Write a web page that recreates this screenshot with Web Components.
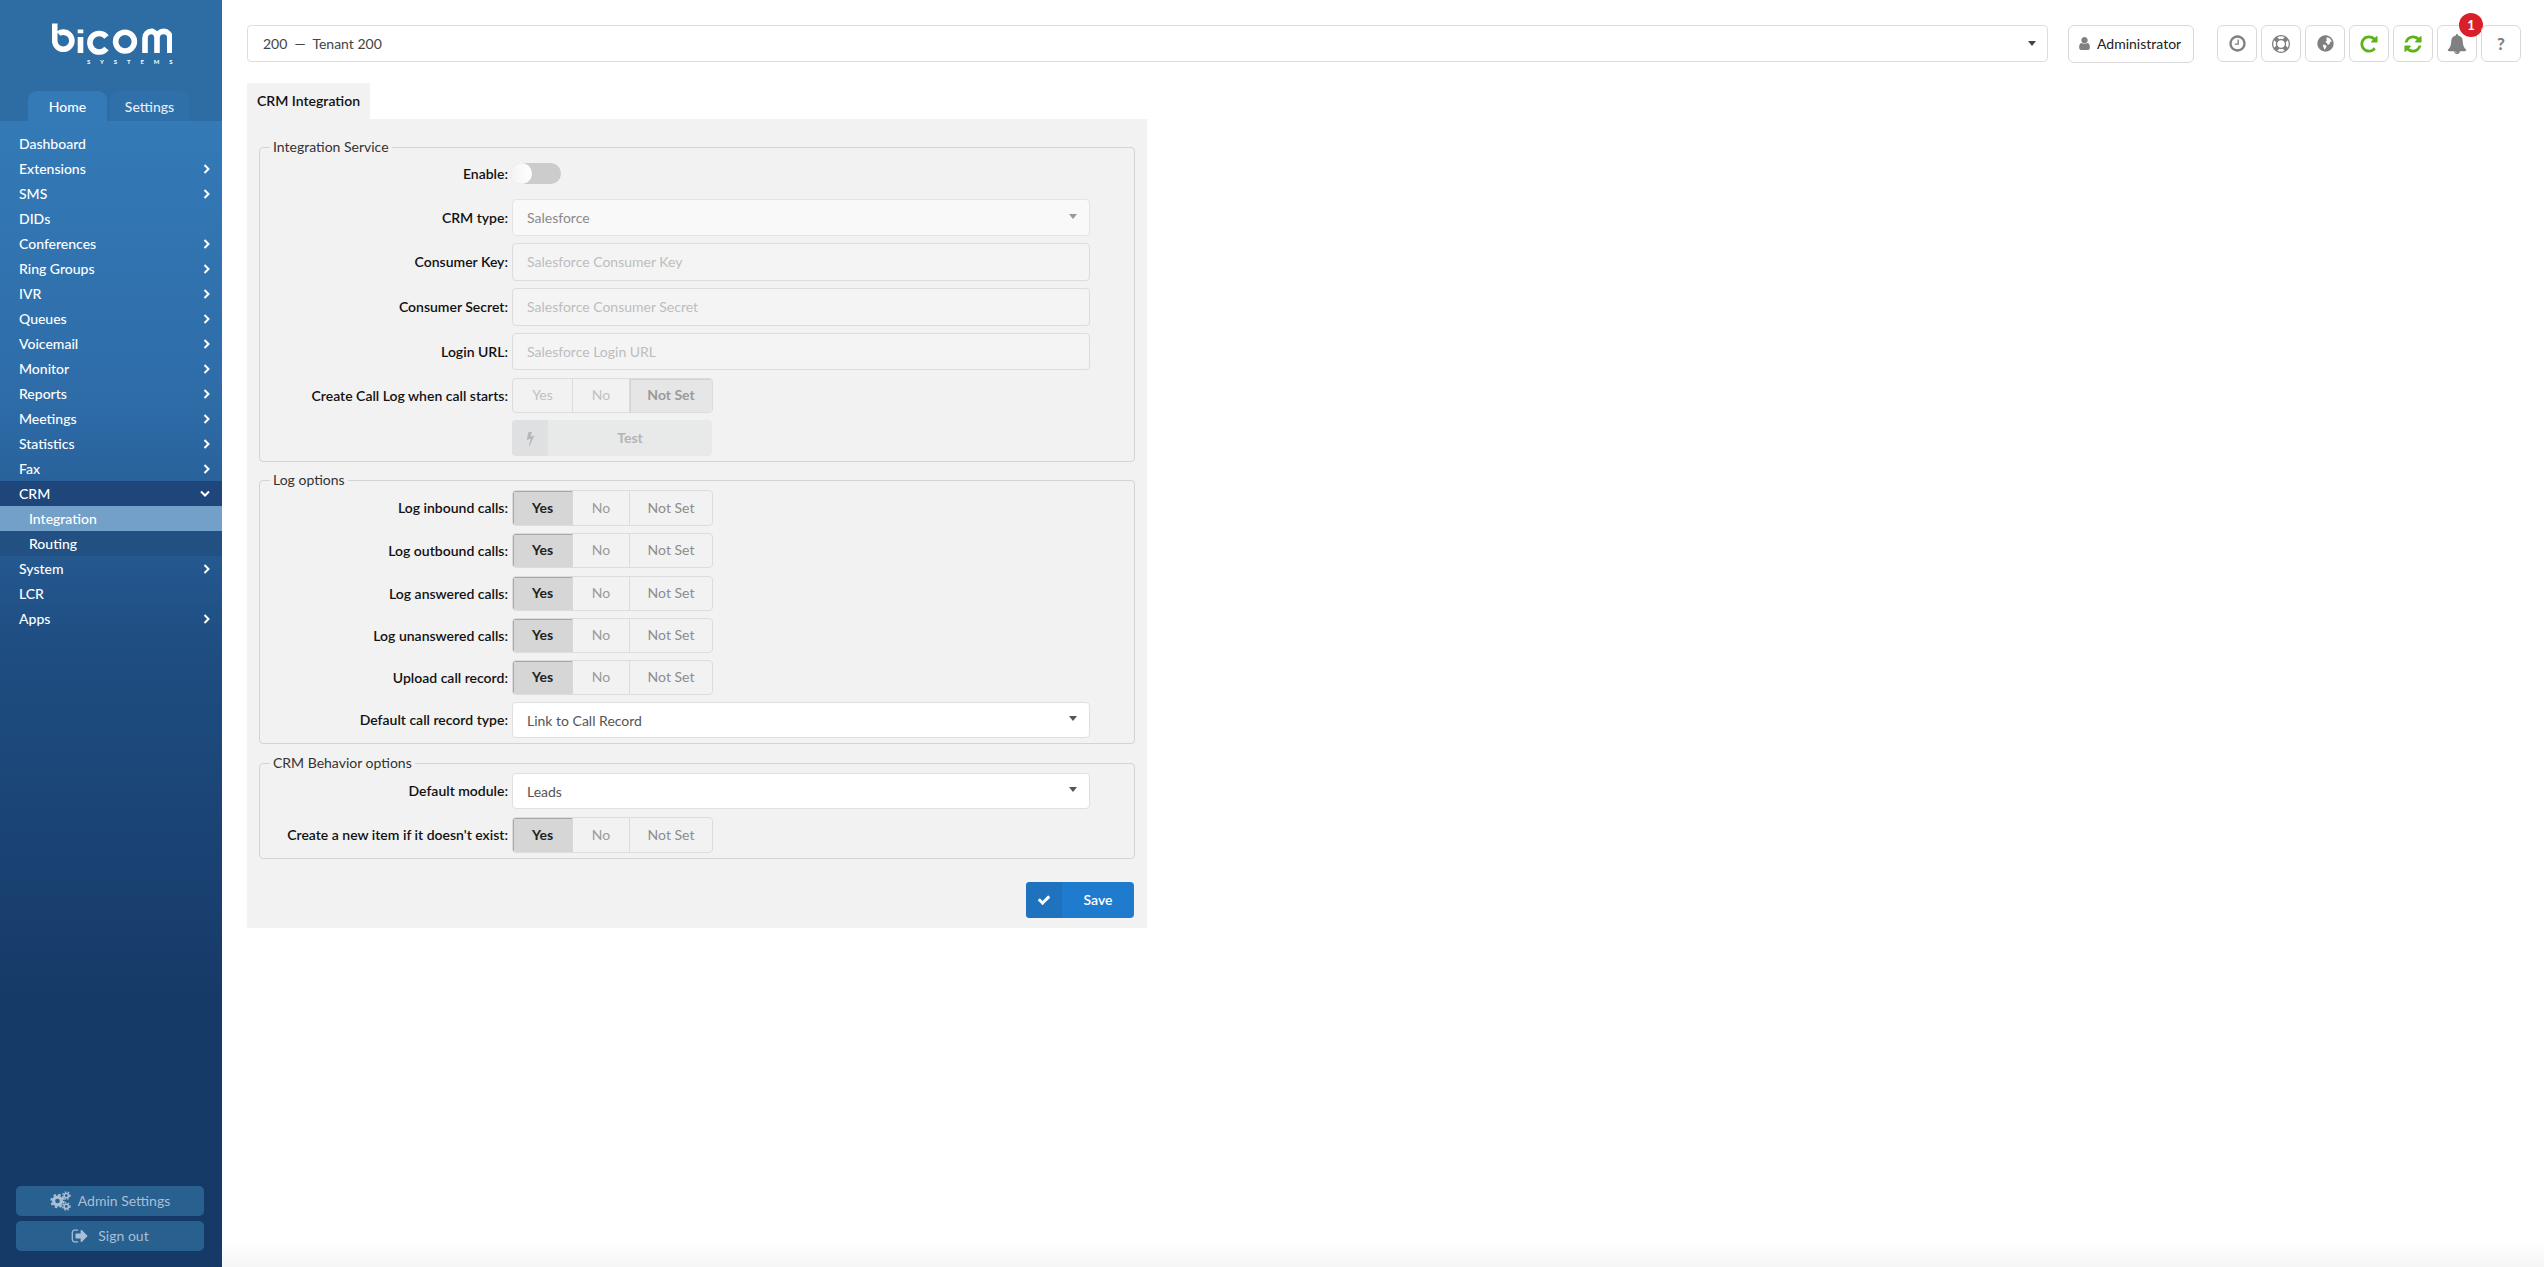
<!DOCTYPE html>
<html lang="en">
<head>
<meta charset="utf-8">
<title>CRM Integration</title>
<style>
  html, body { margin: 0; padding: 0; height: 100%; background: #fff; }
  body { font-family: Lato, "Liberation Sans", sans-serif; font-size: 14px; color: #333; font-feature-settings: "liga", "kern"; }
</style>
</head>
<body>
<app-shell>
  <side-bar slot="side">
    <nav-item label="Dashboard"></nav-item>
    <nav-item label="Extensions" arrow></nav-item>
    <nav-item label="SMS" arrow></nav-item>
    <nav-item label="DIDs"></nav-item>
    <nav-item label="Conferences" arrow></nav-item>
    <nav-item label="Ring Groups" arrow></nav-item>
    <nav-item label="IVR" arrow></nav-item>
    <nav-item label="Queues" arrow></nav-item>
    <nav-item label="Voicemail" arrow></nav-item>
    <nav-item label="Monitor" arrow></nav-item>
    <nav-item label="Reports" arrow></nav-item>
    <nav-item label="Meetings" arrow></nav-item>
    <nav-item label="Statistics" arrow></nav-item>
    <nav-item label="Fax" arrow></nav-item>
    <nav-item label="CRM" open></nav-item>
    <nav-item label="Integration" sub active></nav-item>
    <nav-item label="Routing" sub></nav-item>
    <nav-item label="System" arrow></nav-item>
    <nav-item label="LCR"></nav-item>
    <nav-item label="Apps" arrow></nav-item>
  </side-bar>

  <top-bar>
    <icon-btn icon="clock" size="19"></icon-btn>
    <icon-btn icon="ring" size="18"></icon-btn>
    <icon-btn icon="globe" size="19"></icon-btn>
    <icon-btn icon="repeat" size="20" green></icon-btn>
    <icon-btn icon="refresh" size="20" green></icon-btn>
    <icon-btn icon="bell" size="20" badge="1"></icon-btn>
    <icon-btn text="?"></icon-btn>
  </top-bar>

  <crm-panel title-text="CRM Integration">
    <form-group legend="Integration Service" style="--pt:8px">
      <form-row label="Enable:" style="height:21px"><toggle-switch></toggle-switch></form-row>
      <form-row label="CRM type:" style="margin-top:15px"><select-field value="Salesforce" disabled style="height:37px"></select-field></form-row>
      <form-row label="Consumer Key:" style="margin-top:7px"><text-field placeholder="Salesforce Consumer Key" style="height:38px"></text-field></form-row>
      <form-row label="Consumer Secret:" style="margin-top:7px"><text-field placeholder="Salesforce Consumer Secret" style="height:38px"></text-field></form-row>
      <form-row label="Login URL:" style="margin-top:7px"><text-field placeholder="Salesforce Login URL"></text-field></form-row>
      <form-row label="Create Call Log when call starts:" style="margin-top:8px"><seg-group selected="Not Set" disabled></seg-group></form-row>
      <form-row style="margin-top:7px"><test-button>Test</test-button></form-row>
    </form-group>

    <form-group legend="Log options" style="--pt:2px;margin-top:10px">
      <form-row label="Log inbound calls:" style="height:36px"><seg-group selected="Yes" style="height:36px"></seg-group></form-row>
      <form-row label="Log outbound calls:" style="margin-top:7px"><seg-group selected="Yes"></seg-group></form-row>
      <form-row label="Log answered calls:" style="margin-top:8px"><seg-group selected="Yes"></seg-group></form-row>
      <form-row label="Log unanswered calls:" style="margin-top:7px"><seg-group selected="Yes"></seg-group></form-row>
      <form-row label="Upload call record:" style="margin-top:7px"><seg-group selected="Yes"></seg-group></form-row>
      <form-row label="Default call record type:" style="margin-top:7px"><select-field value="Link to Call Record"></select-field></form-row>
    </form-group>

    <form-group legend="CRM Behavior options" style="--pt:2px;margin-top:11px">
      <form-row label="Default module:"><select-field value="Leads"></select-field></form-row>
      <form-row label="Create a new item if it doesn't exist:" style="margin-top:8px"><seg-group selected="Yes" style="height:36px"></seg-group></form-row>
    </form-group>

    <save-button slot="actions">Save</save-button>
  </crm-panel>
</app-shell>

<script>
// font awesome style glyphs, all on a 1792 box
const GLYPHS = {
  clock: 'M1024 544v448q0 14-9 23t-23 9h-320q-14 0-23-9t-9-23v-64q0-14 9-23t23-9h224v-352q0-14 9-23t23-9h64q14 0 23 9t9 23zm416 352q0-148-73-273t-198-198-273-73-273 73-198 198-73 273 73 273 198 198 273 73 273-73 198-198 73-273zm224 0q0 209-103 385.5t-279.5 279.5-385.5 103-385.5-103-279.5-279.5-103-385.5 103-385.5 279.5-279.5 385.5-103 385.5 103 279.5 279.5 103 385.5z',
  ring: 'M896 0q182 0 348 71t286 191 191 286 71 348-71 348-191 286-286 191-348 71-348-71-286-191-191-286-71-348 71-348 191-286 286-191 348-71zm0 128q-190 0-361 90l194 194q82-28 167-28t167 28l194-194q-171-90-361-90zm-678 1129l194-194q-28-82-28-167t28-167l-194-194q-90 171-90 361t90 361zm678 407q190 0 361-90l-194-194q-82 28-167 28t-167-28l-194 194q171 90 361 90zm0-384q159 0 271.5-112.5t112.5-271.5-112.5-271.5-271.5-112.5-271.5 112.5-112.5 271.5 112.5 271.5 271.5 112.5zm484-217l194 194q90-171 90-361t-90-361l-194 194q28 82 28 167t-28 167z',
  globe: 'M896 128a768 768 0 1 0 .01 0zM1010 300c130 14 250 76 340 168 70 74 122 170 140 270-30-6-60-2-84 20-40-40-80-30-96 20 40 60 30 120-30 150-30 70-90 100-160 120-20-60-70-110-60-180-60-30-130-50-170-110 20-70 90-80 130-130-20-50-50-90-30-130 20-50 20-130 20-198zM700 1000c70-10 140 20 190 70 60 10 110 50 110 110-30 70-60 130-120 180-20 60-30 110-50 140-50-40-70-110-90-170-10-70-50-120-70-180-10-50 0-100 30-150z',
  repeat: 'M1664 256v448q0 26-19 45t-45 19h-448q-42 0-59-40-17-39 14-69l138-138q-148-137-349-137-104 0-198.5 40.5t-163.5 109.5-109.5 163.5-40.5 198.5 40.5 198.5 109.5 163.5 163.5 109.5 198.5 40.5q119 0 225-52t179-147q7-10 23-12 15 0 25 9l137 138q9 8 9.5 20.5t-7.5 22.5q-109 132-264 204.5t-327 72.5q-156 0-298-61t-245-164-164-245-61-298 61-298 164-245 245-164 298-61q147 0 284.5 55.5t244.5 156.5l130-129q29-31 70-14 39 17 39 59z',
  refresh: 'M1639 1056q0 5-1 7-64 268-268 434.5t-478 166.5q-146 0-282.5-55t-243.5-157l-129 129q-19 19-45 19t-45-19-19-45v-448q0-26 19-45t45-19h448q26 0 45 19t19 45-19 45l-137 137q71 66 161 102t187 36q134 0 250-65t186-179q11-17 53-117 8-23 30-23h192q13 0 22.5 9.5t9.5 22.5zm25-800v448q0 26-19 45t-45 19h-448q-26 0-45-19t-19-45 19-45l138-138q-148-137-349-137-134 0-250 65t-186 179q-11 17-53 117-8 23-30 23h-199q-13 0-22.5-9.5t-9.5-22.5v-7q65-268 270-434.5t480-166.5q146 0 284 55.5t245 156.5l130-129q19-19 45-19t45 19 19 45z',
  bell: 'M912 1696q0-16-16-16-59 0-101.5-42.5t-42.5-101.5q0-16-16-16t-16 16q0 73 51.5 124.5t124.5 51.5q16 0 16-16zm816-288q0 52-38 90t-90 38h-448q0 106-75 181t-181 75-181-75-75-181h-448q-52 0-90-38t-38-90q50-42 91-88t85-119.5 74.5-158.5 50-206 19.5-260q0-152 117-282.5t307-158.5q-8-19-8-39 0-40 28-68t68-28 68 28 28 68q0 20-8 39 190 28 307 158.5t117 282.5q0 139 19.5 260t50 206 74.5 158.5 85 119.5 91 88z',
  user: 'M1536 1399q0 109-62.5 187t-150.5 78h-854q-88 0-150.5-78t-62.5-187q0-85 8.5-160.5t31.5-152 58.5-131 94-89 134.5-34.5q131 128 313 128t313-128q76 0 134.5 34.5t94 89 58.5 131 31.5 152 8.5 160.5zm-256-887q0 159-112.5 271.5t-271.5 112.5-271.5-112.5-112.5-271.5 112.5-271.5 271.5-112.5 271.5 112.5 112.5 271.5z',
  check: 'M1671 566q0 40-28 68l-724 724-136 136q-28 28-68 28t-68-28l-136-136-362-362q-28-28-28-68t28-68l136-136q28-28 68-28t68 28l294 295 656-657q28-28 68-28t68 28l136 136q28 28 28 68z',
  bolt: 'M1333 566q18 20 7 44l-540 1157q-13 25-42 25-4 0-14-2-17-5-25.5-19t-4.5-30l197-808-406 101q-4 1-12 1-18 0-31-11-18-15-13-39l201-825q4-14 16-23t28-9h328q19 0 32 12.5t13 29.5q0 8-5 18l-171 463 396-98q8-2 12-2 19 0 34 15z',
  signout: 'M704 1440q0 4 1 20t.5 26.5-3 23.5-10 19.5-20.5 6.5h-320q-119 0-203.5-84.5t-84.5-203.5v-704q0-119 84.5-203.5t203.5-84.5h320q13 0 22.5 9.5t9.5 22.5q0 4 1 20t.5 26.5-3 23.5-10 19.5-20.5 6.5h-320q-66 0-113 47t-47 113v704q0 66 47 113t113 47h312l11.5 1 11.5 3 8 5.5 7 9 2 13.5zm928-544q0 26-19 45l-544 544q-19 19-45 19t-45-19-19-45v-288h-448q-26 0-45-19t-19-45v-384q0-26 19-45t45-19h448v-288q0-26 19-45t45-19 45 19l544 544q19 19 19 45z'
};
const glyph = (name, size) =>
  `<svg width="${size}" height="${size}" viewBox="0 0 1792 1792" fill="currentColor" aria-hidden="true"><path fill-rule="evenodd" d="${GLYPHS[name]}"/></svg>`;

class ShadowEl extends HTMLElement {
  constructor() {
    super();
    this.attachShadow({ mode: 'open' });
  }
  render(html) {
    this.shadowRoot.innerHTML = html;
  }
}

class AppShell extends ShadowEl {
  connectedCallback() {
    this.render(`
      <style>
        :host { display: grid; grid-template-columns: 222px 1fr; min-height: 100vh; }
        .main { display: flex; flex-direction: column; min-height: 100vh; box-sizing: border-box; }
        .content { padding: 25px 23px 0 25px; }
        .foot { margin-top: auto; height: 27px; background: linear-gradient(#fff, #f5f5f5); }
      </style>
      <slot name="side"></slot>
      <div class="main">
        <div class="content"><slot></slot></div>
        <div class="foot"></div>
      </div>`);
  }
}

class SideBar extends ShadowEl {
  connectedCallback() {
    this.render(`
      <style>
        :host { display: flex; flex-direction: column; height: 100vh; color: #fff;
          background: linear-gradient(#337ab7 121px, #2e6ca8 400px, #1f4e82 640px, #163a68 1000px); }
        .head { height: 121px; box-sizing: border-box; background: #2e6da4; position: relative; display: flex; flex-direction: column; }
        .logo { margin: 23px 0 0 52px; height: 42px; position: relative; }
        .logo svg { display: block; }
        .logo span { position: absolute; left: 35px; top: 35px; font: 700 6px/7px Lato, sans-serif; letter-spacing: 9.9px; color: #fff; white-space: nowrap; }
        .tabs { display: flex; gap: 3px; margin: auto 0 0 28px; }
        .tab { width: 79px; height: 30px; line-height: 32px; text-align: center; border-radius: 9px 9px 0 0; background: #2f70aa; color: #e4ecf4; font-weight: 500; }
        .tab.on { background: #337ab7; color: #fff; }
        nav { padding-top: 10px; flex: 1; }
        .btns { padding: 0 18px 16px 16px; display: flex; flex-direction: column; gap: 5px; }
        .btn { height: 30px; line-height: 28px; border-radius: 5px; background: #286090; color: #a9bfd6; display: flex; align-items: center; justify-content: center; gap: 7px; }
        .btn.out { gap: 9px; }
      </style>
      <div class="head">
        <div class="logo">
          <svg width="120" height="32" viewBox="0 0 120 32" fill="none" stroke="#fff" stroke-width="5.6" role="img" aria-label="bicom">
            <path d="M2.7 0.5V17.7a8.6 8.6 0 1 0 8.6-8.6c-2 0-3.6.6-4.8 1.6" stroke-linecap="butt"/>
            <path d="M28.5 6.6v3.6M28.5 14v16"/>
            <path d="M54.5 14a9.3 9.3 0 1 0 0 11.5"/>
            <circle cx="73" cy="18.6" r="9.4"/>
            <path d="M93 30V15a6.6 6.6 0 0 1 6.6-6.6h.8A6.6 6.6 0 0 1 105 15v15M105 15a6.6 6.6 0 0 1 6.6-6.6h.2a6 6 0 0 1 6 6.6v15"/>
          </svg>
          <span>SYSTEMS</span>
        </div>
        <div class="tabs"><div class="tab on">Home</div><div class="tab">Settings</div></div>
      </div>
      <nav><slot></slot></nav>
      <div class="btns">
        <div class="btn">
          <svg width="21" height="20" viewBox="0 0 21 20" fill="none" stroke="currentColor" aria-hidden="true">
            <circle cx="7.5" cy="10" r="3.9" stroke-width="3.2"/>
            <circle cx="7.5" cy="10" r="6.1" stroke-width="2.2" stroke-dasharray="2.4 2.4"/>
            <circle cx="16.3" cy="4.6" r="2.2" stroke-width="1.5"/>
            <circle cx="16.3" cy="4.6" r="3.6" stroke-width="1.5" stroke-dasharray="1.5 1.5"/>
            <circle cx="16.3" cy="15.4" r="2.2" stroke-width="1.5"/>
            <circle cx="16.3" cy="15.4" r="3.6" stroke-width="1.5" stroke-dasharray="1.5 1.5"/>
          </svg>
          <span>Admin Settings</span>
        </div>
        <div class="btn out">${glyph('signout', 18)}<span>Sign out</span></div>
      </div>`);
  }
}

class NavItem extends ShadowEl {
  connectedCallback() {
    const sub = this.hasAttribute('sub');
    const open = this.hasAttribute('open');
    let mark = '';
    if (this.hasAttribute('arrow')) {
      mark = '<svg class="mk" width="8" height="10" viewBox="0 0 8 10" fill="none" stroke="#fff" stroke-width="2"><path d="M1.5 1l4 4-4 4"/></svg>';
    } else if (open) {
      mark = '<svg class="mk dn" width="10" height="8" viewBox="0 0 10 8" fill="none" stroke="#fff" stroke-width="2"><path d="M1 1.5l4 4 4-4"/></svg>';
    }
    let bg = 'transparent';
    if (open) bg = '#1f467a';
    if (sub) bg = '#225082';
    if (this.hasAttribute('active')) bg = '#73a0c8';
    this.render(`
      <style>
        :host { display: flex; align-items: center; height: 25px; padding-left: ${sub ? 29 : 19}px; padding-right: 11px;
          background: ${bg}; color: #fff; font-weight: 500; white-space: nowrap; }
        span { flex: 1; }
        .mk.dn { margin-right: 1px; }
      </style>
      <span>${this.getAttribute('label')}</span>${mark}`);
  }
}

class TopBar extends ShadowEl {
  connectedCallback() {
    this.render(`
      <style>
        :host { display: flex; align-items: center; height: 37px; margin-bottom: 21px; }
        .tenant { flex: 1; height: 37px; box-sizing: border-box; border: 1px solid #dedede; border-radius: 4px; display: flex; align-items: center;
          padding: 0 11px 0 15px; color: #444; }
        .tenant span { flex: 1; }
        .caret { width: 0; height: 0; border: 4px solid transparent; border-top: 5px solid #444; border-bottom: 0; }
        .admin { margin-left: 20px; width: 126px; height: 38px; box-sizing: border-box; border: 1px solid #d9d9d9; border-radius: 6px; display: flex; align-items: center;
          padding-left: 8px; gap: 5px; color: #222; }
        .admin svg { color: #808080; }
        .icons { margin-left: 23px; display: flex; gap: 4px; }
      </style>
      <div class="tenant"><span>200 &nbsp;—&nbsp; Tenant 200</span><div class="caret"></div></div>
      <div class="admin">${glyph('user', 15)}<span>Administrator</span></div>
      <div class="icons"><slot></slot></div>`);
  }
}

class IconBtn extends ShadowEl {
  connectedCallback() {
    const icon = this.getAttribute('icon');
    const green = this.hasAttribute('green');
    const badge = this.getAttribute('badge');
    this.render(`
      <style>
        :host { display: flex; align-items: center; justify-content: center; position: relative; width: 40px; height: 37px; box-sizing: border-box;
          border: 1px solid #d9d9d9; border-radius: 6px; color: ${green ? '#5db319' : '#808080'}; }
        .q { font-weight: 900; font-size: 17px; }
        .badge { position: absolute; left: 21px; top: -13px; width: 24px; height: 24px; border-radius: 50%; background: #d9202a; color: #fff;
          font-size: 13px; font-weight: 700; line-height: 24px; text-align: center; }
      </style>
      ${icon ? glyph(icon, this.getAttribute('size') || 20) : `<span class="q">${this.getAttribute('text')}</span>`}
      ${badge ? `<span class="badge">${badge}</span>` : ''}`);
  }
}

class CrmPanel extends ShadowEl {
  connectedCallback() {
    this.render(`
      <style>
        :host { display: block; width: 900px; }
        .tab { display: inline-block; height: 36px; line-height: 36px; padding: 0 10px; background: #f2f2f2; color: #111; font-weight: 600; vertical-align: top; }
        .body { background: #f2f2f2; padding: 20px 12px 10px; }
        .actions { display: flex; justify-content: flex-end; margin-top: 23px; padding-right: 1px; }
      </style>
      <div class="tab">${this.getAttribute('title-text')}</div>
      <div class="body">
        <slot></slot>
        <div class="actions"><slot name="actions"></slot></div>
      </div>`);
  }
}

class FormGroup extends ShadowEl {
  connectedCallback() {
    this.render(`
      <style>
        :host { display: block; }
        fieldset { margin: 0; border: 1px solid #d4d4d4; border-radius: 4px; padding: var(--pt, 2px) 0 5px; }
        legend { margin-left: 10px; padding: 0 3px; font-size: 14px; line-height: 16px; color: #333; }
      </style>
      <fieldset><legend>${this.getAttribute('legend')}</legend><slot></slot></fieldset>`);
  }
}

class FormRow extends ShadowEl {
  connectedCallback() {
    this.render(`
      <style>
        :host { display: grid; grid-template-columns: 248px 578px; column-gap: 4px; align-items: center; }
        label { text-align: right; color: #111; font-weight: 600; white-space: nowrap; padding-bottom: 1px; }
      </style>
      <label>${this.getAttribute('label') || ''}</label>
      <div><slot></slot></div>`);
  }
}

class TextField extends ShadowEl {
  connectedCallback() {
    this.render(`
      <style>
        :host { display: flex; align-items: center; height: 37px; box-sizing: border-box; border: 1px solid #dcdcdc; border-radius: 4px;
          padding: 0 0 1px 14px; background: #f4f4f4; color: #bdbdbd; }
      </style>
      <span>${this.getAttribute('placeholder')}</span>`);
  }
}

class SelectField extends ShadowEl {
  connectedCallback() {
    const off = this.hasAttribute('disabled');
    this.render(`
      <style>
        :host { display: flex; align-items: center; height: 36px; box-sizing: border-box; border: 1px solid ${off ? '#e4e4e4' : '#e0e0e0'}; border-radius: 4px;
          padding: 0 12px 0 14px; background: ${off ? '#f9f9f9' : '#fff'}; color: ${off ? '#8a8a8a' : '#555'}; }
        span { flex: 1; }
        i { width: 0; height: 0; border: 4px solid transparent; border-top: 5px solid ${off ? '#999' : '#555'}; border-bottom: 0; margin-top: -3px; }
      </style>
      <span>${this.getAttribute('value')}</span><i></i>`);
  }
}

class SegGroup extends ShadowEl {
  connectedCallback() {
    const off = this.hasAttribute('disabled');
    const selected = this.getAttribute('selected');
    const cell = (txt, w) => `<div class="c ${txt === selected ? 'on' : ''} ${txt === 'Not Set' ? 'ns' : ''}" style="width:${w}px">${txt}</div>`;
    this.render(`
      <style>
        :host { display: flex; width: 201px; height: 35px; box-sizing: border-box; border: 1px solid #dcdcdc; border-radius: 4px; overflow: hidden; }
        .c { display: flex; align-items: center; justify-content: center; color: ${off ? '#c0c0c0' : '#9a9a9a'}; border-right: 1px solid #dcdcdc; box-sizing: border-box; padding-bottom: 2px; }
        .c.ns { border-right: 0; flex: 1; color: ${off ? '#c0c0c0' : '#8c8c8c'}; }
        .c.on { background: ${off ? '#e6e6e6' : '#d6d6d6'}; color: ${off ? '#9a9a9a' : '#222'}; font-weight: 700; border-right-color: transparent;
          box-shadow: inset ${off ? '1px 1px 0 #d2d2d2' : '1px 1px 0 #a8a8a8'}; }
      </style>
      ${cell('Yes', 60)}${cell('No', 57)}${cell('Not Set', 84)}`);
  }
}

class ToggleSwitch extends ShadowEl {
  connectedCallback() {
    this.render(`
      <style>
        :host { display: block; width: 50px; height: 21px; margin-left: -1px; border-radius: 11px; background: #ccc; position: relative; }
        i { position: absolute; left: 0; top: 0; width: 21px; height: 21px; border-radius: 50%; background: linear-gradient(90deg, #f4f4f4, #fff); }
      </style>
      <i></i>`);
  }
}

class TestButton extends ShadowEl {
  connectedCallback() {
    this.render(`
      <style>
        :host { display: flex; width: 200px; height: 36px; border-radius: 4px; overflow: hidden; background: #e8e9e9; color: #b4b4b4; font-weight: 700; }
        .ic { width: 36px; background: #dfe0e1; display: flex; align-items: center; justify-content: center; color: #b8b8b8; }
        .tx { flex: 1; display: flex; align-items: center; justify-content: center; padding-bottom: 2px; }
      </style>
      <div class="ic">${glyph('bolt', 15)}</div><div class="tx"><slot></slot></div>`);
  }
}

class SaveButton extends ShadowEl {
  connectedCallback() {
    this.render(`
      <style>
        :host { display: flex; width: 108px; height: 36px; border-radius: 4px; overflow: hidden; background: #1e7bcd; color: #fff; font-weight: 600; }
        .ic { width: 36px; background: #1f72bd; display: flex; align-items: center; justify-content: center; }
        .tx { flex: 1; display: flex; align-items: center; justify-content: center; padding-bottom: 1px; }
      </style>
      <div class="ic">${glyph('check', 14)}</div><div class="tx"><slot></slot></div>`);
  }
}

customElements.define('app-shell', AppShell);
customElements.define('side-bar', SideBar);
customElements.define('nav-item', NavItem);
customElements.define('top-bar', TopBar);
customElements.define('icon-btn', IconBtn);
customElements.define('crm-panel', CrmPanel);
customElements.define('form-group', FormGroup);
customElements.define('form-row', FormRow);
customElements.define('text-field', TextField);
customElements.define('select-field', SelectField);
customElements.define('seg-group', SegGroup);
customElements.define('toggle-switch', ToggleSwitch);
customElements.define('test-button', TestButton);
customElements.define('save-button', SaveButton);
</script>
</body>
</html>
